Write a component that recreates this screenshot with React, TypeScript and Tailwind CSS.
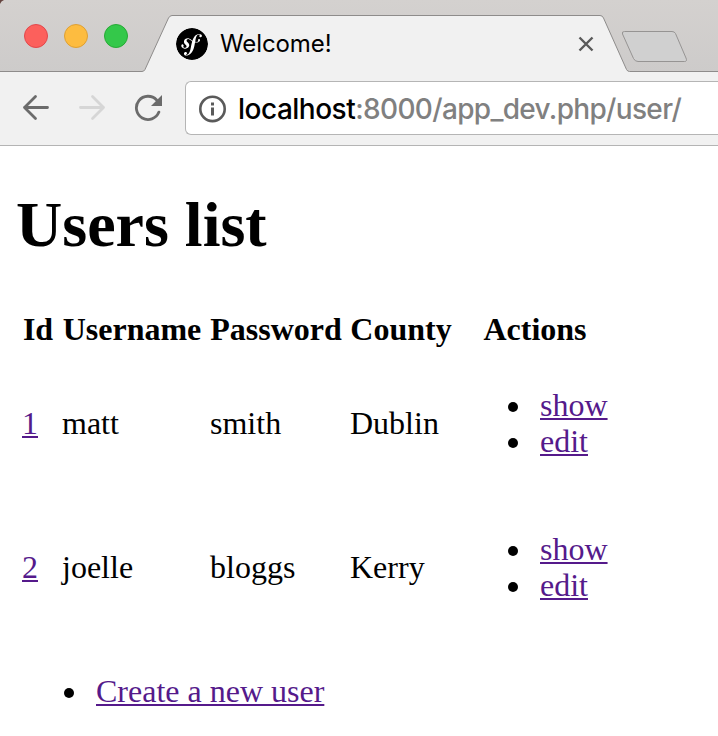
import { SiSymfony } from "react-icons/si";

const users = [
  { id: 1, username: "matt", password: "smith", county: "Dublin" },
  { id: 2, username: "joelle", password: "bloggs", county: "Kerry" },
];

const link = "text-[#551a8b] underline decoration-2 underline-offset-2 [text-decoration-skip-ink:none]";
const bullet = "flex items-center before:mt-1 before:mr-[22px] before:size-2.5 before:rounded-full before:bg-black";

function TabStrip() {
  return (
    <div className="relative h-[72px] w-full bg-linear-to-b from-[#d4d1cf] to-[#cdcbca]">
      <svg className="absolute inset-0" width="718" height="72" viewBox="0 0 718 72" fill="none">
        <path d="M0 0H4Q1 1 0 4Z" fill="#65443f" />
        <path d="M0 71.5H142Q144 71.5 145 69.5L168.5 18Q170 15.5 172 15.5H600Q602.500 15.500 603.500 18L626.500 69.500Q627.500 71.500 629.500 71.500H718V73H0Z" fill="#f1f1f1" />
        <path d="M0 71.5H142Q144 71.5 145 69.5L168.5 18Q170 15.5 172 15.5H600Q602.5 15.5 603.5 18L626.5 69.5Q627.5 71.5 629.5 71.5H718" stroke="#8e8c8b" />
        <path d="M624.500 31.500H672Q674.500 31.500 675.500 33.500L686 58Q687.500 61.500 684.500 61.500H638Q635 61.500 633.500 58.500L622.500 34Q621.500 31.500 624.500 31.500Z" fill="#d0d0d0" stroke="#969493" />
      </svg>
      <div className="relative flex h-full items-center">
        <div className="ml-6 flex gap-4">
          <span className="size-6 rounded-full border border-[#e2474b] bg-[#fc605c]" />
          <span className="size-6 rounded-full border border-[#dea034] bg-[#fdbc40]" />
          <span className="size-6 rounded-full border border-[#27aa35] bg-[#34c84a]" />
        </div>
        <div className="mt-4 ml-12 flex items-center">
          <SiSymfony className="size-8 rounded-full bg-white text-black" />
          <span className="ml-3 w-[350px] font-[Inter,sans-serif] text-[24px] leading-8 tracking-[-0.1px] text-black">Welcome!</span>
          <svg className="ml-2" width="16" height="16" viewBox="0 0 16 16" fill="none" stroke="#5a5a5a" strokeWidth="2.4">
            <path d="M1.500 1.500L14.500 14.500M14.500 1.500L1.500 14.500" />
          </svg>
        </div>
      </div>
    </div>
  );
}

function Toolbar() {
  return (
    <div className="flex h-[74px] items-start overflow-hidden border-b border-[#b4b4b4] bg-[#f1f1f1] pt-[9px]">
      <svg className="mt-[13px] ml-[22px] shrink-0" width="28" height="28" viewBox="0 0 28 28" fill="none" stroke="#6b6b6b" strokeWidth="2.8" strokeLinecap="round" strokeLinejoin="round">
        <path d="M25.500 13.500H2.500M13.500 2.500L2.500 13.500L13.500 24.500" />
      </svg>
      <svg className="mt-[13px] ml-7 shrink-0" width="28" height="28" viewBox="0 0 28 28" fill="none" stroke="#d6d6d6" strokeWidth="2.8" strokeLinecap="round" strokeLinejoin="round">
        <path d="M2.500 13.500H25.500M14.500 2.500L25.500 13.500L14.500 24.500" />
      </svg>
      <svg className="mt-[13px] ml-7 shrink-0" width="30" height="28" viewBox="0 0 30 28" fill="none">
        <path d="M24.900 18.100A11.650 11.650 0 1 1 22.600 6" stroke="#6b6b6b" strokeWidth="2.800" strokeLinecap="round" />
        <path d="M28 1V12H17Z" fill="#6b6b6b" />
      </svg>
      <div className="ml-[21px] flex h-[54px] flex-1 items-center rounded-l-md border border-r-0 border-[#b5b5b5] bg-white pl-[12px]">
        <svg className="shrink-0" width="29" height="29" viewBox="0 0 29 29" fill="none">
          <circle cx="14.500" cy="14.900" r="12.200" stroke="#5a5a5a" strokeWidth="2.600" />
          <path d="M13 8.400H16V11.400H13ZM13 13.400H16V21.400H13Z" fill="#5a5a5a" />
        </svg>
        <div className="mt-0.5 ml-[11px] whitespace-nowrap font-[Inter,sans-serif] text-[28px] leading-9 font-[450] tracking-[-0.67px] text-[#808080]">
          <span className="tracking-[-0.5px] text-black">localhost</span>:8000/app_dev.php/user/
        </div>
      </div>
    </div>
  );
}

function UsersPage() {
  return (
    <main className="px-4 pt-[42px] font-['Liberation_Serif',serif] text-[32px] leading-9 text-black">
      <h1 className="mb-[43px] text-[64px] leading-[74px] font-bold">Users list</h1>
      <table className="w-[600px] table-fixed border-separate border-spacing-1">
        <colgroup>
          <col className="w-[36px]" />
          <col className="w-[144px]" />
          <col className="w-[136px]" />
          <col className="w-[106px]" />
          <col className="w-[154px]" />
        </colgroup>
        <thead>
          <tr>
            {["Id", "Username", "Password", "County", "Actions"].map((label) => (
              <th key={label} className="p-0.5 text-center font-bold">{label}</th>
            ))}
          </tr>
        </thead>
        <tbody>
          {users.map((user) => (
            <tr key={user.id}>
              <td className="p-0.5"><a className={link}>{user.id}</a></td>
              <td className="p-0.5">{user.username}</td>
              <td className="p-0.5">{user.password}</td>
              <td className="p-0.5">{user.county}</td>
              <td className="p-0.5">
                <ul className="my-8 pl-12">
                  <li className={bullet}><a className={link}>show</a></li>
                  <li className={bullet}><a className={link}>edit</a></li>
                </ul>
              </td>
            </tr>
          ))}
        </tbody>
      </table>
      <ul className="mt-8 pl-12">
        <li className={bullet}><a className={link}>Create a new user</a></li>
      </ul>
    </main>
  );
}

export default function App() {
  return (
    <div className="h-[736px] w-[718px] overflow-hidden bg-white">
      <TabStrip />
      <Toolbar />
      <UsersPage />
    </div>
  );
}
